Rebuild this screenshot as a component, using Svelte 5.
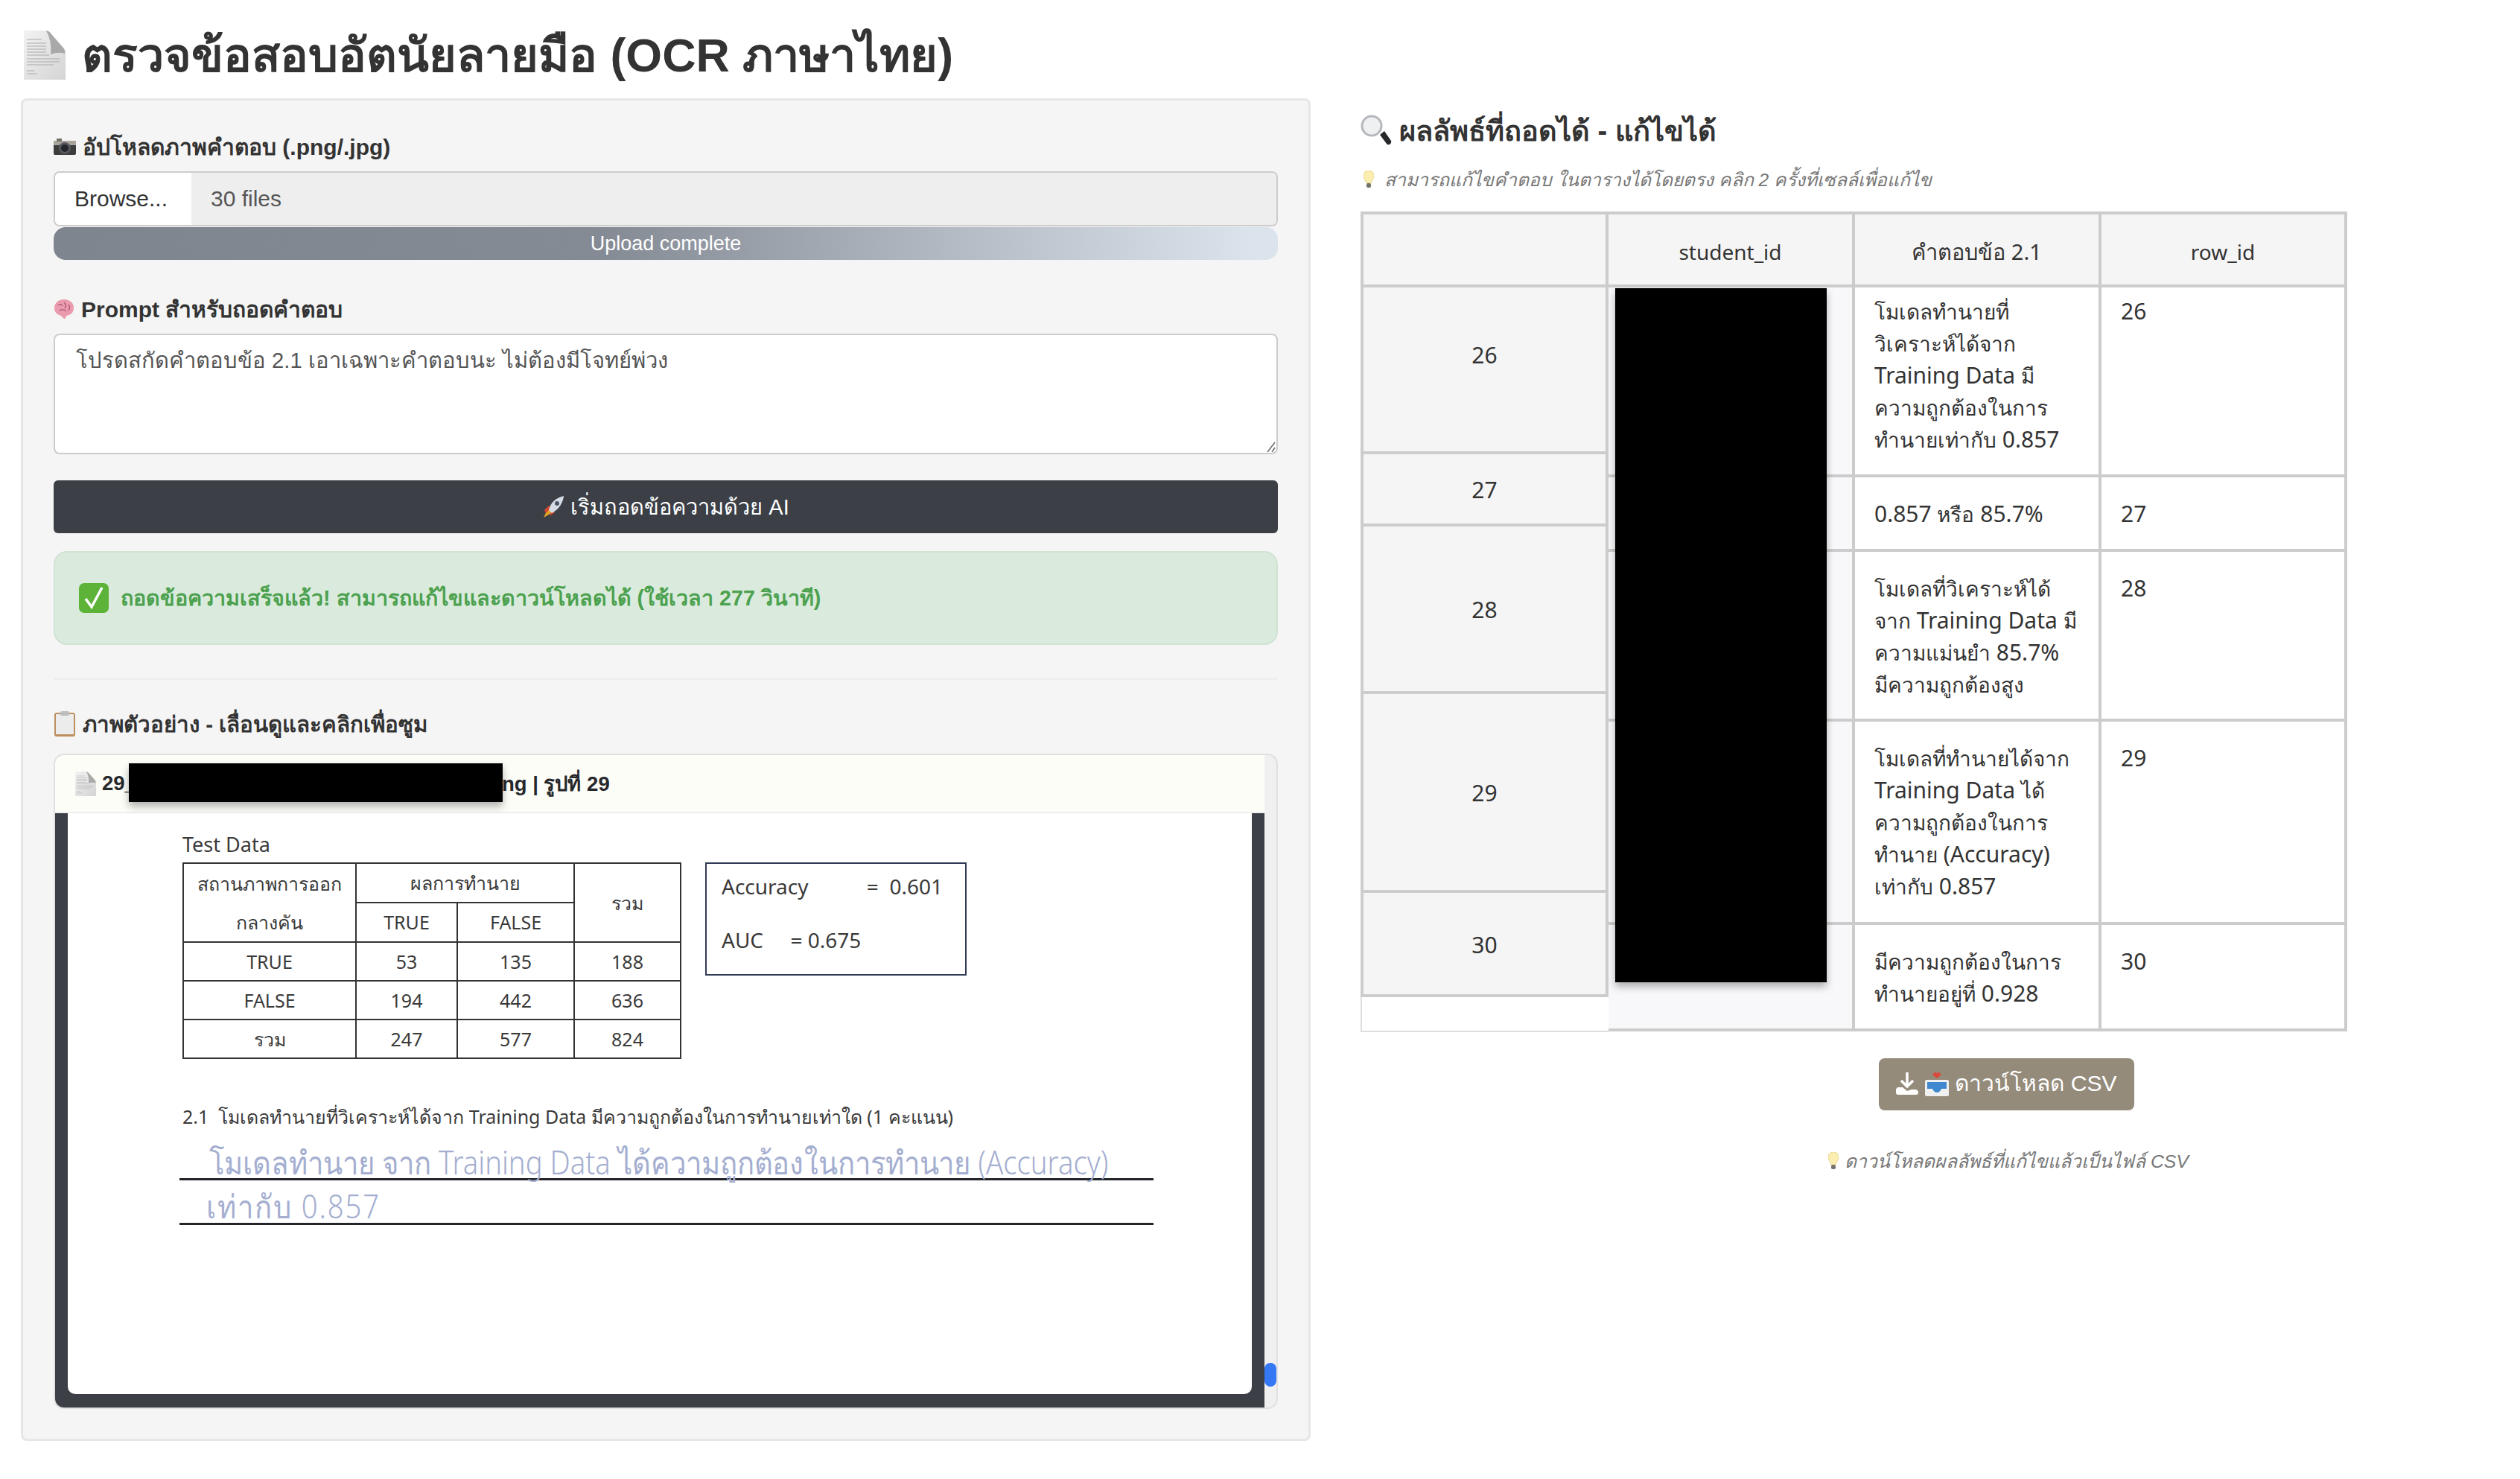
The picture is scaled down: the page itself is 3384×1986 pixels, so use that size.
<script>
  const heads = [
    { id: 26, h: 224, first: true },
    { id: 27, h: 97 },
    { id: 28, h: 225 },
    { id: 29, h: 267 },
    { id: 30, h: 140 }
  ];

  const rows = [
    { id: 26, h: 255, first: true, lines: ["โมเดลทำนายที่", "วิเคราะห์ได้จาก", "Training Data มี", "ความถูกต้องในการ", "ทำนายเท่ากับ 0.857"] },
    { id: 27, h: 100, lines: ["0.857 หรือ 85.7%"] },
    { id: 28, h: 228, lines: ["โมเดลที่วิเคราะห์ได้", "จาก Training Data มี", "ความแม่นยำ 85.7%", "มีความถูกต้องสูง"] },
    { id: 29, h: 273, lines: ["โมเดลที่ทำนายได้จาก", "Training Data ได้", "ความถูกต้องในการ", "ทำนาย (Accuracy)", "เท่ากับ 0.857"] },
    { id: 30, h: 143, lines: ["มีความถูกต้องในการ", "ทำนายอยู่ที่ 0.928"] }
  ];

  const scan = [
    ["TRUE", 53, 135, 188],
    ["FALSE", 194, 442, 636],
    ["รวม", 247, 577, 824]
  ];

  // thai runs are set a bit smaller than latin, the reference font is narrower there
  const parts = (s) => s.split(/([\u0E00-\u0E7F]+)/).filter(Boolean);
  const isThai = (s) => /[\u0E00-\u0E7F]/.test(s);
</script>

{#snippet doc(w, h)}
  <svg class="ico" width={w} height={h} viewBox="0 0 56 66">
    <defs>
      <linearGradient id="pg" x1="0" y1="0" x2="1" y2="1">
        <stop offset="0" stop-color="#f2f2f2" />
        <stop offset="1" stop-color="#d4d4d4" />
      </linearGradient>
    </defs>
    <path d="M0 0H28Q32 0 36 5L52 22Q56 26 56 30V66H0Z" fill="url(#pg)" />
    <path d="M30 0Q34 0 38 6L52 22Q56 26 55 31Q48 28 36 32Q38 14 30 0Z" fill="#a9a9a9" />
    <path d="M4 12H24M4 17H30M4 21H30M4 25H30M4 29H30M4 33H34M4 38H48M4 42H48M4 46H40M4 54H14M4 58H18" stroke="#aaa" stroke-width="1" />
  </svg>
{/snippet}

{#snippet bulb()}
  <svg class="ico" width="14" height="24" viewBox="0 0 14 24">
    <path d="M7 0C3 0 0 3 0 7C0 11 3 12 4 17H10C11 12 14 11 14 7C14 3 11 0 7 0Z" fill="#fbeeb0" stroke="#e6d489" />
    <rect x="4" y="17" width="6" height="6" rx="2" fill="#77736a" />
  </svg>
{/snippet}

<div class="page">
  <h1 class="title">
    {@render doc(56, 66)}
    <span>ตรวจข้อสอบอัตนัยลายมือ (OCR ภาษาไทย)</span>
  </h1>

  <div class="cols">
    <section class="card">
      <div class="label first">
        <svg class="ico" width="30" height="22" viewBox="0 0 30 22">
          <rect y="3" width="30" height="19" rx="2" fill="#3d3d3d" />
          <rect y="3" width="30" height="6" fill="#a9a59c" />
          <rect x="4" y="0" width="7" height="4" fill="#77736a" />
          <circle cx="15" cy="13" r="8" fill="#55585e" />
          <circle cx="15" cy="13" r="5" fill="#23252a" />
        </svg>
        <span>อัปโหลดภาพคำตอบ (.png/.jpg)</span>
      </div>
      <div class="file">
        <div class="browse">Browse...</div>
        <div class="files">30 files</div>
      </div>
      <div class="progress">Upload complete</div>

      <div class="label second">
        <svg class="ico" width="28" height="28" viewBox="0 0 28 28">
          <path d="M14 1C6 1 1 6 1 13C1 19 6 22 10 23L14 27C16 27 17 25 17 23C23 22 27 19 27 12C27 5 21 1 14 1Z" fill="#ea9cae" />
          <path d="M6 9Q10 6 12 10M14 5Q18 9 15 13M8 16Q13 13 17 17M20 8Q23 12 20 16" fill="none" stroke="#b95f78" stroke-width="1.5" />
        </svg>
        <span>Prompt สำหรับถอดคำตอบ</span>
      </div>
      <div class="area">
        โปรดสกัดคำตอบข้อ 2.1 เอาเฉพาะคำตอบนะ ไม่ต้องมีโจทย์พ่วง
        <svg class="grip" width="12" height="14" viewBox="0 0 12 14">
          <path d="M1 14L11 1M7 14L11 8" stroke="#666" stroke-width="1.5" />
        </svg>
      </div>

      <button class="run">
        <svg class="ico" width="30" height="32" viewBox="0 0 30 32">
          <path d="M2 30L8 17L14 23Z" fill="#e2a326" />
          <path d="M3 20L9 14L12 17L5 24Z" fill="#d6452f" />
          <path d="M10 28L13 20L17 23Z" fill="#d6452f" />
          <path d="M9 20C11 10 19 3 29 1C28 11 22 19 13 24Z" fill="#d6dce6" />
          <circle cx="20" cy="11" r="3" fill="#4a5568" />
        </svg>
        <span>เริ่มถอดข้อความด้วย AI</span>
      </button>

      <div class="ok">
        <svg class="ico" width="40" height="40" viewBox="0 0 40 40">
          <rect width="40" height="40" rx="7" fill="#5cb338" />
          <path d="M9 21L17 32L31 6" fill="none" stroke="#fff" stroke-width="3.5" />
        </svg>
        <span>ถอดข้อความเสร็จแล้ว! สามารถแก้ไขและดาวน์โหลดได้ (ใช้เวลา 277 วินาที)</span>
      </div>

      <hr />

      <div class="label third">
        <svg class="ico" width="30" height="34" viewBox="0 0 28 34">
          <rect y="2" width="28" height="32" rx="3" fill="#bc8f5f" />
          <rect x="2" y="4" width="24" height="27" fill="#ececec" />
          <rect x="8" y="0" width="12" height="6" rx="2" fill="#bdbdbd" />
        </svg>
        <span>ภาพตัวอย่าง - เลื่อนดูและคลิกเพื่อซูม</span>
      </div>

      <div class="preview">
        <div class="content">
          <div class="cap">
            {@render doc(28, 33)}
            <span>29_</span>
            <span class="cap-gap"></span>
            <span>ng | รูปที่ 29</span>
            <span class="cap-mask"></span>
          </div>
          <div class="frame">
            <div class="sheet">
              <div class="scan-title">Test Data</div>
              <div class="scan-top">
                <table class="scan">
                  <colgroup>
                    <col class="c1" />
                    <col class="c2" />
                    <col class="c3" />
                    <col class="c4" />
                  </colgroup>
                  <tbody>
                    <tr>
                      <td rowspan="2" class="status">สถานภาพการออก<br /><span class="status-2">กลางคัน</span></td>
                      <td colspan="2">ผลการทำนาย</td>
                      <td rowspan="2">รวม</td>
                    </tr>
                    <tr><td>TRUE</td><td>FALSE</td></tr>
                    {#each scan as r}
                      <tr>
                        {#each r as c}<td>{c}</td>{/each}
                      </tr>
                    {/each}
                  </tbody>
                </table>
                <div class="metrics">
                  <div class="metric-a"><span>Accuracy</span><span>=&nbsp; 0.601</span></div>
                  <div class="metric-b">AUC &nbsp;&nbsp;&nbsp; = 0.675</div>
                </div>
              </div>
              <div class="question">2.1&nbsp; โมเดลทำนายที่วิเคราะห์ได้จาก Training Data มีความถูกต้องในการทำนายเท่าใด (1 คะแนน)</div>
              <div class="hand one"><span>โมเดลทำนาย จาก Training Data ได้ความถูกต้องในการทำนาย (Accuracy)</span></div>
              <div class="hand two"><span>เท่ากับ 0.857</span></div>
            </div>
          </div>
        </div>
        <div class="track"><div class="thumb"></div></div>
      </div>
    </section>

    <section class="result">
      <h3 class="result-title">
        <svg class="ico" width="42" height="42" viewBox="0 0 42 42">
          <path d="M26 27L32 22L41 35Q42 38 39 40Q36 41 35 39Z" fill="#26282c" />
          <circle cx="15" cy="15" r="13" fill="#eef0f2" stroke="#b4b8bd" stroke-width="3" />
        </svg>
        <span>ผลลัพธ์ที่ถอดได้ - แก้ไขได้</span>
      </h3>
      <div class="hint">
        {@render bulb()}
        <span>สามารถแก้ไขคำตอบ ในตารางได้โดยตรง คลิก 2 ครั้งที่เซลล์เพื่อแก้ไข</span>
      </div>

      <div class="sheet-wrap">
        <div class="heads">
          <div class="corner"></div>
          {#each heads as r}
            <div class="head" class:first={r.first} style={`height:${r.h}px`}>{r.id}</div>
          {/each}
          <div class="head-end"></div>
        </div>
        <div class="grid">
          <div class="th">student_id</div>
          <div class="th th-thai">คำตอบข้อ 2.1</div>
          <div class="th">row_id</div>
          {#each rows as r}
            <div class="td ro" style={`height:${r.h}px`}></div>
            <div class="td" class:first={r.first} style={`height:${r.h}px`}>
              {#each r.lines as l}
                <div class="ln">{#each parts(l) as p}{#if isThai(p)}<span class="thai">{p}</span>{:else}{p}{/if}{/each}</div>
              {/each}
            </div>
            <div class="td" class:first={r.first} style={`height:${r.h}px`}>{r.id}</div>
          {/each}
        </div>
        <div class="mask"></div>
      </div>

      <div class="dl">
        <button class="csv">
          <svg class="ico" width="32" height="32" viewBox="0 0 32 32">
            <path d="M16 1V19M8 12L16 20L24 12" fill="none" stroke="#fff" stroke-width="3.5" />
            <path d="M1 25Q1 21 5 21H10L16 26L22 24H28Q31 25 31 28Q31 31 28 31H4Q1 31 1 28Z" fill="#fff" />
          </svg>
          <svg class="ico" width="32" height="34" viewBox="0 0 32 34">
            <path d="M16 10L10 5Q13 0 16 3Q19 0 22 5Z" fill="#d94a3d" />
            <rect x="0" y="12" width="32" height="22" rx="2" fill="#f0f0f0" />
            <path d="M3 15H29V24H22Q20 29 16 29Q12 29 10 24H3Z" fill="#3f87cf" />
          </svg>
          <span>ดาวน์โหลด CSV</span>
        </button>
        <div class="dl-hint">
          {@render bulb()}
          <span>ดาวน์โหลดผลลัพธ์ที่แก้ไขแล้วเป็นไฟล์ CSV</span>
        </div>
      </div>
    </section>
  </div>
</div>

<style>
  :global(body) {
    margin: 0;
    background: #fff;
  }
  .page {
    width: 3384px;
    height: 1986px;
    box-sizing: border-box;
    padding: 0 0 0 28px;
    font-family: "Liberation Sans", "Noto Sans", sans-serif;
    color: #333;
    overflow: hidden;
  }
  .ico {
    flex: none;
    display: block;
  }
  .title {
    display: flex;
    align-items: center;
    gap: 22px;
    height: 132px;
    margin: 0;
    padding: 16px 0 0 4px;
    box-sizing: border-box;
    font-size: 62.8px;
    font-weight: 700;
    color: #333;
  }
  .cols {
    display: flex;
    gap: 66px;
  }
  .card {
    width: 1732px;
    height: 1803px;
    box-sizing: border-box;
    background: #f5f5f5;
    border: 3px solid #e6e6e6;
    border-radius: 8px;
    padding: 39px 41px;
  }
  .label {
    display: flex;
    align-items: center;
    gap: 9px;
    height: 46px;
    font-size: 30px;
    font-weight: 700;
    color: #333;
  }
  .label.first {
    margin-bottom: 10px;
  }
  .label.second {
    margin: 43px 0 10px;
  }
  .label.third {
    margin: 36px 0 17px;
    font-size: 29.5px;
  }
  .file {
    display: flex;
    height: 74px;
    box-sizing: border-box;
    border: 2px solid #ccc;
    border-radius: 8px;
    overflow: hidden;
    font-size: 30px;
    line-height: 70px;
  }
  .browse {
    width: 183px;
    box-sizing: border-box;
    padding-left: 26px;
    background: #fff;
    color: #333;
  }
  .files {
    flex: 1;
    padding-left: 26px;
    background: #eee;
    color: #555;
  }
  .progress {
    height: 44px;
    margin-top: 1px;
    border-radius: 16px;
    background: linear-gradient(90deg, #7f858f 0%, #858b95 45%, #dbe3ec 98%);
    color: #fff;
    font-size: 27px;
    line-height: 44px;
    text-align: center;
  }
  .area {
    position: relative;
    height: 162px;
    box-sizing: border-box;
    background: #fff;
    border: 2px solid #ccc;
    border-radius: 8px;
    padding: 14px 28px;
    font-size: 29.2px;
    line-height: 40px;
    color: #555;
  }
  .grip {
    position: absolute;
    right: 1px;
    bottom: 1px;
  }
  .run {
    display: flex;
    align-items: center;
    justify-content: center;
    gap: 8px;
    width: 100%;
    height: 71px;
    margin-top: 35px;
    border: 0;
    border-radius: 6px;
    background: #3c4046;
    color: #fff;
    font: inherit;
    font-size: 29px;
  }
  .ok {
    display: flex;
    align-items: center;
    gap: 16px;
    height: 126px;
    box-sizing: border-box;
    margin-top: 24px;
    padding-left: 32px;
    background: #daebdd;
    border: 2px solid #cfe3d3;
    border-radius: 18px;
    color: #4ca14f;
    font-size: 28.7px;
    font-weight: 700;
  }
  hr {
    height: 3px;
    margin: 44px 0 0;
    border: 0;
    background: #eee;
  }
  .preview {
    display: flex;
    height: 880px;
    box-sizing: border-box;
    background: #f0f0f0;
    border: 2px solid #e0e0e0;
    border-radius: 14px;
    overflow: hidden;
  }
  .content {
    width: 1624px;
    display: flex;
    flex-direction: column;
  }
  .cap {
    position: relative;
    display: flex;
    align-items: center;
    gap: 8px;
    height: 78px;
    flex: none;
    box-sizing: border-box;
    padding-left: 27px;
    background: #fdfdf8;
    border-bottom: 2px solid #eee;
    font-size: 27.5px;
    font-weight: 700;
    color: #26282c;
  }
  .cap-gap {
    width: 483px;
    margin-right: -8px;
  }
  .cap-mask {
    position: absolute;
    left: 99px;
    top: 11px;
    width: 502px;
    height: 52px;
    background: #000;
    box-shadow: 0 6px 10px rgba(0, 0, 0, 0.3);
  }
  .frame {
    flex: 1;
    background: #3c4046;
    padding: 0 17px 18px;
  }
  .sheet {
    height: 100%;
    box-sizing: border-box;
    background: #fff;
    border-radius: 0 0 10px 10px;
    padding: 24px 0 0 154px;
    color: #3a3a3a;
    font-family: "Noto Sans", sans-serif;
    font-size: 25px;
  }
  .scan-title {
    height: 42px;
    line-height: 36px;
    font-size: 27px;
  }
  .scan-top {
    display: flex;
    gap: 32px;
    align-items: flex-start;
  }
  table.scan {
    width: 668px;
    height: 259px;
    border-collapse: collapse;
    table-layout: fixed;
    border: 2px solid #333;
  }
  .c1 {
    width: 232px;
  }
  .c2 {
    width: 136px;
  }
  .c3 {
    width: 157px;
  }
  .c4 {
    width: 143px;
  }
  .scan td {
    border: 2px solid #333;
    padding: 0;
    text-align: center;
    height: 50px;
    line-height: 1;
  }
  .scan td.status {
    line-height: 52px;
  }
  .status-2 {
    display: inline-block;
  }
  .metrics {
    width: 351px;
    height: 152px;
    box-sizing: border-box;
    border: 2px solid #2f3a55;
    padding: 10px 20px;
    font-size: 28px;
    line-height: 40px;
  }
  .metric-a {
    display: flex;
    justify-content: space-between;
    margin-right: 10px;
  }
  .metric-b {
    margin-top: 32px;
  }
  .question {
    margin: 57px 0 0 0;
    height: 40px;
    line-height: 40px;
    font-size: 25px;
    white-space: nowrap;
  }
  .hand {
    margin-left: -4px;
    width: 1308px;
    box-sizing: border-box;
    border-bottom: 3px solid #23252a;
    font-family: "Noto Sans", sans-serif;
    font-weight: 300;
    color: #a4aed0;
    white-space: nowrap;
    font-size: 40px;
  }
  .hand span {
    display: inline-block;
    transform: scale(0.957, 1.08);
    transform-origin: left center;
  }
  .hand.one {
    height: 66px;
    padding: 20px 0 0 40px;
    line-height: 43px;
  }
  .hand.two {
    height: 60px;
    padding: 12px 0 0 36px;
    line-height: 45px;
    letter-spacing: 2px;
  }
  .track {
    flex: 1;
    display: flex;
    flex-direction: column;
    justify-content: flex-end;
    padding-bottom: 28px;
  }
  .thumb {
    height: 32px;
    border-radius: 9px;
    background: #3478f6;
  }

  .result {
    width: 1532px;
    padding-top: 18px;
    margin-left: 1px;
  }
  .result-title {
    display: flex;
    align-items: center;
    gap: 10px;
    height: 50px;
    margin: 0;
    font-size: 38px;
    font-weight: 700;
    color: #333;
  }
  .hint {
    display: flex;
    align-items: center;
    gap: 14px;
    height: 36px;
    margin: 23px 0 25px 4px;
    font-size: 24.7px;
    font-style: italic;
    color: #777;
  }
  .sheet-wrap {
    position: relative;
    display: flex;
    align-items: flex-start;
    width: 1324px;
    font-family: "Noto Sans", sans-serif;
    font-size: 30px;
    color: #333;
  }
  .thai {
    font-size: 28px;
  }
  .heads {
    width: 333px;
    flex: none;
  }
  .corner,
  .th {
    height: 102px;
    box-sizing: border-box;
    background: #f5f5f5;
    border-top: 4px solid #ccc;
    border-right: 4px solid #ccc;
    border-bottom: 4px solid #ccc;
    text-align: center;
    line-height: 100px;
    font-size: 28px;
  }
  .th-thai {
    font-size: 29px;
  }
  .corner {
    border-left: 4px solid #ccc;
  }
  .head {
    display: flex;
    align-items: center;
    justify-content: center;
    box-sizing: border-box;
    background: #f5f5f5;
    border-left: 4px solid #ccc;
    border-right: 4px solid #ccc;
    border-bottom: 4px solid #ccc;
    padding-top: 2px;
  }
  .head.first {
    padding: 0 0 40px;
  }
  .head-end {
    height: 47px;
    box-sizing: border-box;
    border-left: 2px solid #ddd;
    border-bottom: 2px solid #ddd;
  }
  .grid {
    display: grid;
    grid-template-columns: 331px 331px 330px;
  }
  .td {
    box-sizing: border-box;
    border-right: 4px solid #ccc;
    border-bottom: 4px solid #ccc;
    padding: 27px 26px 0;
    line-height: 43px;
    white-space: nowrap;
  }
  .td.first {
    padding-top: 10px;
  }
  .ln {
    height: 43px;
  }
  .ro {
    background: #f8f8fb;
  }
  .mask {
    position: absolute;
    left: 342px;
    top: 103px;
    width: 284px;
    height: 932px;
    background: #000;
    box-shadow: 0 6px 10px rgba(0, 0, 0, 0.3);
  }
  .dl {
    width: 1330px;
    margin-left: auto;
    display: flex;
    flex-direction: column;
    align-items: center;
    margin-top: 35px;
  }
  .csv {
    display: flex;
    align-items: center;
    gap: 8px;
    height: 70px;
    width: 343px;
    justify-content: center;
    border: 0;
    border-radius: 8px;
    padding: 0 0 3px;
    background: #958b7b;
    color: #fff;
    font: inherit;
    font-size: 30px;
  }
  .dl-hint {
    display: flex;
    align-items: center;
    gap: 8px;
    margin-top: 50px;
    padding-left: 6px;
    height: 36px;
    font-size: 24.8px;
    font-style: italic;
    color: #777;
  }
</style>
